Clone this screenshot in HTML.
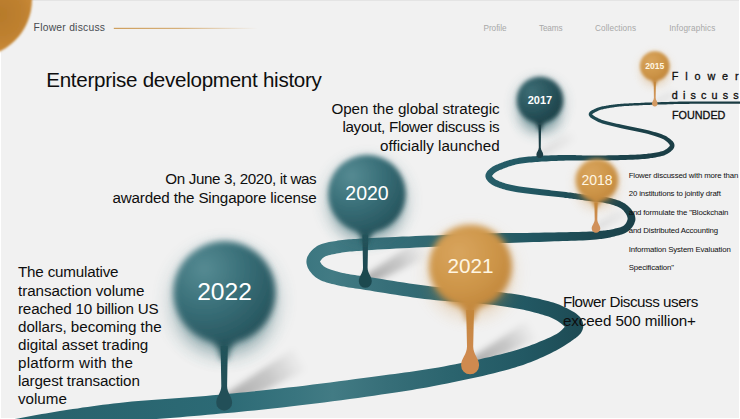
<!DOCTYPE html>
<html lang="en"><head><meta charset="utf-8"><title>Flower discuss</title>
<style>
html,body{margin:0;padding:0;background:#fff}
body{width:740px;height:419px;overflow:hidden;position:relative;font-family:"Liberation Sans", sans-serif}
#bg{position:absolute;left:1px;top:0;width:738px;height:417px;background:#f1f1f1;border-top:1px solid #e4e4e4;overflow:hidden}
#stage{position:absolute;left:0;top:0;width:740px;height:419px;overflow:hidden}
.t{position:absolute;white-space:pre;line-height:normal}
</style></head><body>
<div id="bg"></div>
<div id="stage">
<svg width="740" height="419" viewBox="0 0 740 419" style="position:absolute;left:0;top:0">
<defs><linearGradient id="rg" gradientUnits="userSpaceOnUse" x1="0" y1="0" x2="740" y2="0">
<stop offset="0" stop-color="#27606a"/><stop offset="0.30" stop-color="#2c6a75"/><stop offset="0.40" stop-color="#39757f"/><stop offset="0.45" stop-color="#427b84"/><stop offset="0.52" stop-color="#376f79"/><stop offset="0.61" stop-color="#2b646e"/><stop offset="0.71" stop-color="#225863"/><stop offset="0.79" stop-color="#1d4a53"/><stop offset="0.86" stop-color="#1b4048"/><stop offset="1" stop-color="#1a3a41"/></linearGradient>
<radialGradient id="gt" cx="0.30" cy="0.27" r="0.88"><stop offset="0" stop-color="#568b93"/><stop offset="0.45" stop-color="#396f78"/><stop offset="0.8" stop-color="#2a5a63"/><stop offset="1" stop-color="#1e4850"/></radialGradient>
<radialGradient id="gd" cx="0.32" cy="0.32" r="0.80"><stop offset="0" stop-color="#3d6d75"/><stop offset="0.5" stop-color="#2a565e"/><stop offset="1" stop-color="#193c43"/></radialGradient>
<radialGradient id="go" cx="0.36" cy="0.34" r="0.80"><stop offset="0" stop-color="#d9a55e"/><stop offset="0.55" stop-color="#cd9548"/><stop offset="1" stop-color="#be8238"/></radialGradient>
<radialGradient id="gb" gradientUnits="userSpaceOnUse" cx="0" cy="14" r="40"><stop offset="0" stop-color="#b67a2b"/><stop offset="0.6" stop-color="#bf8130"/><stop offset="1" stop-color="#cc8c3a"/></radialGradient>
<linearGradient id="hl" x1="0" x2="1"><stop offset="0" stop-color="#c07c1e"/><stop offset="0.45" stop-color="#c4842a" stop-opacity="0.85"/><stop offset="1" stop-color="#c88a32" stop-opacity="0"/></linearGradient>
<filter id="b2015" x="-30%" y="-30%" width="160%" height="160%"><feGaussianBlur stdDeviation="1.5"/></filter>
<filter id="h2015" x="-50%" y="-50%" width="200%" height="200%"><feGaussianBlur stdDeviation="4.8"/></filter>
<filter id="b2017" x="-30%" y="-30%" width="160%" height="160%"><feGaussianBlur stdDeviation="2.2"/></filter>
<filter id="h2017" x="-50%" y="-50%" width="200%" height="200%"><feGaussianBlur stdDeviation="7.0"/></filter>
<filter id="b2018" x="-30%" y="-30%" width="160%" height="160%"><feGaussianBlur stdDeviation="1.9"/></filter>
<filter id="h2018" x="-50%" y="-50%" width="200%" height="200%"><feGaussianBlur stdDeviation="6.1"/></filter>
<filter id="b2020" x="-30%" y="-30%" width="160%" height="160%"><feGaussianBlur stdDeviation="2.6"/></filter>
<filter id="h2020" x="-50%" y="-50%" width="200%" height="200%"><feGaussianBlur stdDeviation="8.3"/></filter>
<filter id="b2021" x="-30%" y="-30%" width="160%" height="160%"><feGaussianBlur stdDeviation="3.0"/></filter>
<filter id="h2021" x="-50%" y="-50%" width="200%" height="200%"><feGaussianBlur stdDeviation="9.6"/></filter>
<filter id="b2022" x="-30%" y="-30%" width="160%" height="160%"><feGaussianBlur stdDeviation="3.3"/></filter>
<filter id="h2022" x="-50%" y="-50%" width="200%" height="200%"><feGaussianBlur stdDeviation="10.6"/></filter>
<filter id="bb" x="-10%" y="-10%" width="120%" height="120%"><feGaussianBlur stdDeviation="1.1"/></filter>
<filter id="sh" x="-30%" y="-30%" width="160%" height="160%"><feGaussianBlur stdDeviation="3"/></filter>
<filter id="s1" x="-10%" y="-10%" width="120%" height="120%"><feGaussianBlur stdDeviation="0.5"/></filter>
<linearGradient id="sg2015" gradientUnits="userSpaceOnUse" x1="654.8" y1="103.6" x2="677.3" y2="90.6"><stop offset="0" stop-color="#000" stop-opacity="0.1"/><stop offset="0.55" stop-color="#000" stop-opacity="0.060"/><stop offset="1" stop-color="#000" stop-opacity="0"/></linearGradient>
<linearGradient id="sg2017" gradientUnits="userSpaceOnUse" x1="539.8" y1="154.5" x2="575.3" y2="134.1"><stop offset="0" stop-color="#000" stop-opacity="0.1"/><stop offset="0.55" stop-color="#000" stop-opacity="0.060"/><stop offset="1" stop-color="#000" stop-opacity="0"/></linearGradient>
<linearGradient id="sg2018" gradientUnits="userSpaceOnUse" x1="596.0" y1="228.4" x2="628.4" y2="209.8"><stop offset="0" stop-color="#000" stop-opacity="0.1"/><stop offset="0.55" stop-color="#000" stop-opacity="0.060"/><stop offset="1" stop-color="#000" stop-opacity="0"/></linearGradient>
<linearGradient id="sg2020" gradientUnits="userSpaceOnUse" x1="365.3" y1="281.3" x2="424.4" y2="247.4"><stop offset="0" stop-color="#000" stop-opacity="0.3"/><stop offset="0.55" stop-color="#000" stop-opacity="0.180"/><stop offset="1" stop-color="#000" stop-opacity="0"/></linearGradient>
<linearGradient id="sg2021" gradientUnits="userSpaceOnUse" x1="470.1" y1="365.3" x2="533.3" y2="329.0"><stop offset="0" stop-color="#000" stop-opacity="0.3"/><stop offset="0.55" stop-color="#000" stop-opacity="0.180"/><stop offset="1" stop-color="#000" stop-opacity="0"/></linearGradient>
<linearGradient id="sg2022" gradientUnits="userSpaceOnUse" x1="224.2" y1="402.7" x2="301.8" y2="358.1"><stop offset="0" stop-color="#000" stop-opacity="0.3"/><stop offset="0.55" stop-color="#000" stop-opacity="0.180"/><stop offset="1" stop-color="#000" stop-opacity="0"/></linearGradient>
<linearGradient id="st2015" x1="0" y1="0" x2="0" y2="1"><stop offset="0" stop-color="#c4863a"/><stop offset="0.7" stop-color="#d39a62"/><stop offset="1" stop-color="#d39a62"/></linearGradient>
<linearGradient id="st2017" x1="0" y1="0" x2="0" y2="1"><stop offset="0" stop-color="#1a3d44"/><stop offset="0.7" stop-color="#1b3d44"/><stop offset="1" stop-color="#1b3d44"/></linearGradient>
<linearGradient id="st2018" x1="0" y1="0" x2="0" y2="1"><stop offset="0" stop-color="#c4863a"/><stop offset="0.7" stop-color="#d0905a"/><stop offset="1" stop-color="#d0905a"/></linearGradient>
<linearGradient id="st2020" x1="0" y1="0" x2="0" y2="1"><stop offset="0" stop-color="#24525a"/><stop offset="0.7" stop-color="#1d4850"/><stop offset="1" stop-color="#1d4850"/></linearGradient>
<linearGradient id="st2021" x1="0" y1="0" x2="0" y2="1"><stop offset="0" stop-color="#c4863a"/><stop offset="0.7" stop-color="#cf8a50"/><stop offset="1" stop-color="#cf8a50"/></linearGradient>
<linearGradient id="st2022" x1="0" y1="0" x2="0" y2="1"><stop offset="0" stop-color="#24525a"/><stop offset="0.7" stop-color="#245058"/><stop offset="1" stop-color="#245058"/></linearGradient></defs>
<circle cx="-26" cy="-0.5" r="58" fill="url(#gb)" filter="url(#bb)"/>
<rect x="113.8" y="27.85" width="144" height="0.85" fill="url(#hl)"/>
<path d="M653.8,101.9 L675.5,87.5 L679.2,93.8 L655.8,105.3Z" fill="url(#sg2015)" filter="url(#sh)"/>
<path d="M538.3,151.9 L572.4,129.1 L578.2,139.1 L541.3,157.1Z" fill="url(#sg2017)" filter="url(#sh)"/>
<path d="M594.6,226.0 L625.8,205.2 L631.1,214.3 L597.4,230.8Z" fill="url(#sg2018)" filter="url(#sh)"/>
<path d="M362.8,276.9 L419.6,239.0 L429.2,255.7 L367.8,285.7Z" fill="url(#sg2020)" filter="url(#sh)"/>
<path d="M467.4,360.6 L528.2,320.1 L538.4,337.9 L472.8,370.0Z" fill="url(#sg2021)" filter="url(#sh)"/>
<path d="M220.9,396.9 L295.5,347.1 L308.1,369.0 L227.5,408.5Z" fill="url(#sg2022)" filter="url(#sh)"/>
<path d="M748.0,101.4 L747.3,101.4 L745.3,101.4 L742.2,101.4 L738.3,101.4 L733.7,101.4 L728.6,101.4 L723.3,101.4 L717.9,101.4 L712.7,101.4 L707.8,101.4 L703.5,101.4 L700.0,101.5 L698.1,101.5 L696.4,101.5 L694.7,101.5 L693.1,101.5 L691.6,101.5 L690.1,101.5 L688.7,101.5 L687.2,101.5 L685.7,101.5 L684.2,101.6 L682.6,101.6 L681.0,101.6 L678.9,101.6 L676.9,101.7 L674.7,101.7 L672.5,101.8 L670.3,101.8 L668.1,101.9 L665.9,102.0 L663.6,102.0 L661.4,102.1 L659.2,102.2 L657.1,102.2 L655.0,102.3 L653.0,102.4 L651.1,102.4 L649.2,102.5 L647.3,102.6 L645.4,102.6 L643.5,102.7 L641.6,102.8 L639.8,102.9 L638.0,102.9 L636.3,103.0 L634.6,103.1 L632.9,103.2 L631.7,103.2 L630.6,103.3 L629.4,103.3 L628.3,103.4 L627.2,103.4 L626.2,103.5 L625.1,103.5 L624.1,103.6 L623.0,103.7 L622.0,103.7 L620.9,103.8 L619.9,103.9 L618.8,104.0 L617.8,104.1 L616.8,104.2 L615.8,104.3 L614.7,104.4 L613.7,104.5 L612.7,104.7 L611.7,104.8 L610.7,105.0 L609.7,105.1 L608.7,105.3 L607.8,105.4 L606.9,105.6 L606.0,105.7 L605.1,105.9 L604.3,106.0 L603.4,106.2 L602.5,106.3 L601.6,106.5 L600.8,106.7 L599.9,107.0 L599.1,107.2 L598.2,107.5 L597.4,107.8 L596.7,108.1 L595.8,108.5 L595.0,108.8 L594.1,109.2 L593.2,109.7 L592.4,110.1 L591.5,110.6 L590.8,111.1 L590.1,111.6 L589.5,112.3 L589.0,113.1 L588.7,114.1 L588.8,115.2 L589.3,116.0 L589.8,116.8 L590.4,117.4 L591.2,118.0 L591.9,118.5 L592.8,119.1 L593.7,119.6 L594.6,120.1 L595.5,120.6 L596.4,121.0 L597.3,121.5 L598.8,122.2 L600.4,122.8 L602.1,123.4 L604.0,124.0 L605.9,124.5 L607.9,125.0 L609.9,125.6 L611.9,126.1 L614.0,126.5 L616.1,127.0 L618.1,127.5 L620.1,128.0 L622.4,128.5 L624.7,129.1 L627.1,129.6 L629.6,130.1 L632.0,130.5 L634.5,131.0 L636.9,131.5 L639.4,132.0 L641.7,132.5 L644.0,133.0 L646.1,133.5 L648.2,134.1 L649.8,134.6 L651.5,135.0 L653.1,135.5 L654.7,135.9 L656.2,136.4 L657.7,136.9 L659.1,137.4 L660.5,137.9 L661.7,138.4 L662.9,139.0 L663.9,139.5 L664.9,140.2 L665.6,140.7 L666.2,141.2 L666.9,141.7 L667.5,142.3 L668.1,142.9 L668.6,143.4 L669.1,143.9 L669.4,144.4 L669.7,144.9 L669.8,145.2 L669.9,145.4 L669.9,145.5 L669.8,145.5 L669.8,145.7 L669.6,146.0 L669.3,146.4 L669.0,146.8 L668.5,147.3 L668.0,147.8 L667.5,148.2 L666.8,148.7 L666.2,149.2 L665.5,149.6 L664.9,150.0 L664.0,150.5 L662.9,150.9 L661.8,151.3 L660.5,151.6 L659.2,151.9 L657.8,152.2 L656.3,152.5 L654.8,152.7 L653.2,153.0 L651.6,153.2 L650.0,153.4 L648.4,153.6 L646.3,153.9 L644.2,154.1 L642.0,154.3 L639.8,154.4 L637.5,154.6 L635.1,154.7 L632.7,154.8 L630.3,154.8 L627.9,154.9 L625.4,155.0 L622.9,155.0 L620.4,155.1 L617.6,155.2 L614.7,155.2 L611.6,155.3 L608.5,155.3 L605.4,155.4 L602.3,155.4 L599.2,155.4 L596.2,155.4 L593.3,155.4 L590.5,155.4 L587.8,155.4 L585.4,155.4 L583.9,155.4 L582.6,155.4 L581.3,155.3 L580.0,155.3 L578.8,155.2 L577.7,155.2 L576.5,155.2 L575.3,155.1 L574.1,155.1 L572.8,155.1 L571.4,155.1 L570.0,155.1 L567.9,155.1 L565.7,155.1 L563.4,155.1 L561.0,155.1 L558.6,155.1 L556.1,155.2 L553.6,155.3 L551.1,155.3 L548.6,155.4 L546.1,155.5 L543.7,155.6 L541.4,155.8 L539.3,155.9 L537.2,156.0 L535.1,156.2 L533.0,156.3 L530.9,156.5 L528.9,156.6 L526.8,156.8 L524.8,157.0 L522.8,157.3 L520.9,157.5 L519.0,157.8 L517.1,158.2 L515.7,158.4 L514.4,158.7 L513.1,159.0 L511.8,159.4 L510.5,159.7 L509.3,160.0 L508.1,160.4 L506.9,160.8 L505.7,161.2 L504.5,161.6 L503.4,162.0 L502.3,162.4 L501.3,162.8 L500.3,163.2 L499.3,163.5 L498.3,163.9 L497.3,164.4 L496.2,164.8 L495.2,165.3 L494.3,165.7 L493.3,166.3 L492.4,166.8 L491.5,167.4 L490.7,168.0 L490.1,168.5 L489.6,169.0 L489.0,169.5 L488.5,170.0 L487.9,170.5 L487.4,171.1 L486.9,171.8 L486.5,172.5 L486.1,173.2 L485.7,174.0 L485.5,175.0 L485.4,176.0 L485.5,177.1 L485.8,178.0 L486.1,178.8 L486.5,179.5 L487.0,180.2 L487.5,180.8 L488.0,181.4 L488.5,181.9 L489.1,182.5 L489.6,182.9 L490.2,183.4 L490.8,183.8 L491.6,184.4 L492.5,185.0 L493.4,185.5 L494.4,186.0 L495.3,186.4 L496.4,186.8 L497.4,187.2 L498.4,187.6 L499.4,188.0 L500.4,188.3 L501.4,188.6 L502.4,189.0 L503.6,189.3 L504.8,189.6 L505.9,189.9 L507.1,190.2 L508.3,190.5 L509.5,190.8 L510.7,191.0 L512.0,191.2 L513.2,191.5 L514.5,191.7 L515.8,191.9 L517.2,192.2 L519.0,192.5 L520.9,192.7 L522.8,193.0 L524.7,193.3 L526.7,193.5 L528.8,193.8 L530.8,194.0 L532.9,194.2 L535.0,194.5 L537.1,194.7 L539.2,194.9 L541.2,195.2 L543.6,195.4 L545.9,195.7 L548.4,196.0 L550.9,196.3 L553.4,196.5 L555.9,196.8 L558.3,197.1 L560.7,197.3 L563.1,197.6 L565.4,197.9 L567.6,198.1 L569.6,198.4 L571.1,198.6 L572.4,198.7 L573.7,198.9 L574.9,199.1 L576.2,199.2 L577.3,199.4 L578.5,199.6 L579.7,199.7 L581.0,199.9 L582.2,200.1 L583.6,200.3 L585.0,200.5 L587.0,200.7 L589.1,201.0 L591.3,201.2 L593.6,201.5 L595.9,201.7 L598.3,202.0 L600.6,202.3 L602.8,202.6 L605.0,203.0 L607.0,203.4 L608.9,203.8 L610.7,204.3 L612.0,204.7 L613.2,205.1 L614.4,205.5 L615.6,205.9 L616.7,206.3 L617.8,206.8 L618.8,207.2 L619.7,207.7 L620.6,208.2 L621.4,208.8 L622.2,209.4 L622.9,210.0 L623.5,210.6 L624.1,211.4 L624.8,212.2 L625.3,213.0 L625.9,213.8 L626.4,214.7 L626.8,215.5 L627.1,216.3 L627.3,217.0 L627.5,217.7 L627.6,218.2 L627.6,218.6 L627.6,219.0 L627.5,219.4 L627.4,219.9 L627.2,220.5 L627.0,221.1 L626.7,221.8 L626.4,222.4 L626.0,223.1 L625.6,223.7 L625.1,224.3 L624.6,224.8 L624.2,225.3 L623.6,225.7 L623.0,226.1 L622.3,226.5 L621.5,226.8 L620.5,227.2 L619.5,227.5 L618.5,227.8 L617.4,228.1 L616.2,228.3 L615.0,228.6 L613.8,228.9 L612.6,229.2 L611.3,229.4 L610.1,229.7 L608.8,229.9 L607.6,230.1 L606.3,230.3 L604.9,230.4 L603.6,230.5 L602.1,230.7 L600.6,230.8 L599.0,230.9 L597.4,231.0 L595.7,231.2 L592.7,231.4 L589.5,231.5 L586.1,231.7 L582.5,231.8 L578.7,231.9 L574.8,232.0 L570.8,232.1 L566.8,232.2 L562.6,232.3 L558.4,232.3 L554.1,232.4 L549.9,232.5 L544.5,232.6 L538.8,232.7 L533.0,232.8 L526.9,232.9 L520.8,232.9 L514.6,233.0 L508.4,233.1 L502.3,233.1 L496.3,233.2 L490.6,233.3 L485.0,233.4 L479.8,233.6 L476.1,233.7 L472.6,233.8 L469.2,233.9 L466.0,234.0 L462.9,234.1 L459.8,234.3 L456.7,234.4 L453.5,234.6 L450.3,234.7 L446.9,234.8 L443.4,235.0 L439.7,235.2 L434.3,235.4 L428.4,235.6 L422.1,235.8 L415.6,236.1 L408.9,236.4 L402.2,236.6 L395.5,236.9 L388.9,237.2 L382.6,237.4 L376.6,237.7 L371.1,238.0 L366.1,238.3 L363.3,238.5 L360.7,238.6 L358.2,238.8 L355.8,238.9 L353.4,239.0 L351.1,239.2 L348.9,239.3 L346.7,239.5 L344.5,239.7 L342.3,240.0 L340.1,240.3 L337.9,240.6 L336.2,240.9 L334.4,241.2 L332.6,241.5 L330.8,241.8 L329.0,242.1 L327.1,242.5 L325.3,242.9 L323.4,243.4 L321.6,244.0 L319.8,244.8 L318.0,245.6 L316.4,246.6 L315.2,247.5 L314.1,248.3 L313.0,249.2 L312.0,250.2 L311.0,251.3 L310.0,252.4 L309.2,253.6 L308.4,254.9 L307.6,256.3 L307.0,257.8 L306.6,259.5 L306.4,261.4 L306.5,263.3 L306.9,265.0 L307.4,266.7 L308.0,268.2 L308.8,269.5 L309.6,270.9 L310.5,272.1 L311.5,273.3 L312.5,274.4 L313.6,275.4 L314.7,276.4 L315.9,277.4 L317.5,278.5 L319.2,279.6 L321.0,280.4 L322.8,281.2 L324.7,281.8 L326.5,282.4 L328.4,282.9 L330.2,283.4 L332.0,283.9 L333.8,284.3 L335.6,284.8 L337.4,285.2 L339.6,285.7 L341.8,286.2 L344.0,286.6 L346.2,287.0 L348.4,287.4 L350.7,287.8 L353.0,288.1 L355.3,288.4 L357.8,288.8 L360.2,289.1 L362.8,289.5 L365.5,289.9 L369.9,290.6 L374.6,291.4 L379.6,292.2 L384.9,293.0 L390.3,293.9 L395.9,294.8 L401.6,295.7 L407.4,296.5 L413.1,297.4 L418.9,298.2 L424.6,298.9 L430.2,299.6 L436.1,300.3 L442.0,300.8 L448.1,301.3 L454.1,301.8 L460.2,302.3 L466.3,302.7 L472.2,303.2 L478.1,303.6 L483.7,304.1 L489.1,304.6 L494.3,305.1 L499.1,305.7 L502.5,306.2 L505.8,306.7 L509.0,307.2 L512.1,307.7 L515.1,308.2 L518.0,308.7 L520.9,309.3 L523.7,309.8 L526.4,310.4 L529.0,311.0 L531.7,311.7 L534.3,312.4 L536.5,313.0 L538.6,313.6 L540.7,314.2 L542.8,314.8 L544.8,315.4 L546.7,316.0 L548.5,316.6 L550.2,317.3 L551.9,318.0 L553.4,318.7 L554.9,319.5 L556.3,320.3 L557.6,321.1 L559.0,322.1 L560.4,323.1 L561.7,324.1 L562.9,325.1 L564.0,326.0 L564.9,326.9 L565.6,327.6 L565.9,328.1 L565.9,328.2 L565.6,327.7 L565.4,326.7 L565.4,325.3 L565.7,324.5 L565.9,324.2 L566.1,324.3 L566.0,324.7 L565.7,325.3 L565.3,326.0 L564.7,326.8 L564.0,327.7 L563.2,328.6 L562.3,329.5 L561.5,330.3 L560.1,331.5 L558.5,332.7 L556.6,333.9 L554.5,335.1 L552.2,336.2 L549.7,337.4 L547.2,338.5 L544.6,339.7 L542.0,340.8 L539.3,341.8 L536.8,342.9 L534.3,343.9 L531.9,344.8 L529.6,345.7 L527.4,346.5 L525.1,347.3 L522.8,348.1 L520.5,348.8 L518.2,349.5 L515.7,350.2 L513.2,351.0 L510.5,351.7 L507.7,352.5 L504.8,353.2 L500.2,354.4 L495.3,355.6 L490.1,356.9 L484.6,358.1 L479.0,359.4 L473.2,360.6 L467.3,361.8 L461.3,363.0 L455.4,364.2 L449.6,365.3 L443.9,366.4 L438.4,367.4 L433.4,368.3 L428.5,369.1 L423.7,369.8 L418.9,370.6 L414.2,371.2 L409.4,371.9 L404.6,372.6 L399.7,373.2 L394.7,373.9 L389.5,374.5 L384.2,375.2 L378.7,376.0 L371.3,377.0 L363.5,378.0 L355.5,379.1 L347.2,380.2 L338.8,381.3 L330.2,382.4 L321.6,383.5 L313.0,384.6 L304.5,385.7 L296.1,386.7 L287.9,387.6 L279.9,388.6 L272.9,389.3 L266.0,390.1 L259.2,390.8 L252.4,391.5 L245.7,392.2 L239.1,392.8 L232.4,393.5 L225.8,394.1 L219.2,394.7 L212.5,395.3 L205.8,395.9 L199.2,396.5 L192.5,397.1 L185.8,397.6 L179.0,398.1 L172.2,398.6 L165.3,399.1 L158.5,399.6 L151.7,400.1 L145.0,400.6 L138.3,401.1 L131.8,401.6 L125.3,402.3 L118.9,402.9 L113.5,403.5 L108.2,404.2 L102.9,404.8 L97.7,405.5 L92.6,406.2 L87.6,406.9 L82.6,407.6 L77.7,408.4 L72.8,409.1 L67.9,409.8 L63.2,410.6 L58.4,411.3 L54.2,412.0 L50.0,412.7 L45.8,413.4 L41.8,414.1 L37.7,414.8 L33.7,415.5 L29.7,416.3 L25.8,417.0 L21.9,417.7 L18.0,418.4 L14.1,419.1 L10.3,419.8 L6.4,420.4 L2.1,421.2 L-2.4,422.0 L-7.1,422.8 L-11.7,423.6 L-16.2,424.4 L-20.3,425.1 L-24.1,425.8 L-27.2,426.4 L-29.6,426.8 L-31.2,427.1 L-31.7,427.2 L-28.3,446.8 L-27.7,446.8 L-26.2,446.5 L-23.7,446.0 L-20.6,445.5 L-16.9,444.8 L-12.7,444.1 L-8.2,443.3 L-3.6,442.5 L1.1,441.7 L5.6,440.9 L9.9,440.1 L13.7,439.4 L17.6,438.8 L21.5,438.1 L25.4,437.4 L29.3,436.7 L33.3,436.0 L37.2,435.2 L41.2,434.5 L45.2,433.8 L49.2,433.1 L53.3,432.4 L57.4,431.8 L61.6,431.1 L66.3,430.3 L71.1,429.5 L75.9,428.8 L80.7,428.0 L85.6,427.2 L90.5,426.5 L95.4,425.7 L100.4,425.0 L105.5,424.3 L110.6,423.6 L115.8,422.9 L121.1,422.3 L127.2,421.6 L133.5,421.0 L140.0,420.4 L146.6,419.8 L153.2,419.3 L159.9,418.7 L166.7,418.2 L173.6,417.7 L180.4,417.2 L187.3,416.6 L194.1,416.1 L200.8,415.5 L207.6,414.8 L214.2,414.2 L220.9,413.6 L227.6,413.0 L234.2,412.4 L240.9,411.7 L247.6,411.1 L254.4,410.4 L261.2,409.7 L268.0,409.0 L275.0,408.2 L282.1,407.4 L290.1,406.5 L298.3,405.5 L306.8,404.5 L315.4,403.5 L324.0,402.4 L332.7,401.3 L341.2,400.2 L349.7,399.0 L358.0,397.9 L366.1,396.8 L373.9,395.7 L381.3,394.6 L386.8,393.8 L392.1,393.0 L397.3,392.2 L402.3,391.4 L407.2,390.7 L412.1,389.9 L416.9,389.1 L421.8,388.3 L426.6,387.4 L431.5,386.5 L436.5,385.6 L441.6,384.6 L447.2,383.5 L453.0,382.3 L458.9,381.1 L464.8,379.8 L470.8,378.6 L476.8,377.2 L482.7,375.9 L488.4,374.5 L494.0,373.2 L499.4,371.8 L504.5,370.5 L509.2,369.2 L512.2,368.3 L515.1,367.4 L517.8,366.6 L520.5,365.7 L523.1,364.9 L525.6,364.0 L528.0,363.1 L530.5,362.2 L532.9,361.3 L535.4,360.3 L537.8,359.2 L540.3,358.1 L542.9,357.0 L545.5,355.8 L548.1,354.5 L550.8,353.2 L553.5,351.8 L556.2,350.4 L558.8,349.0 L561.4,347.5 L563.9,346.1 L566.2,344.6 L568.5,343.1 L570.5,341.7 L571.7,340.8 L572.9,340.0 L574.1,339.1 L575.4,338.3 L576.6,337.3 L577.9,336.3 L579.1,335.1 L580.4,333.7 L581.5,332.0 L582.5,329.9 L583.2,327.4 L583.2,324.3 L582.5,321.2 L581.1,318.6 L579.5,316.6 L577.8,314.9 L576.1,313.5 L574.3,312.3 L572.4,311.2 L570.6,310.2 L568.8,309.2 L567.0,308.3 L565.4,307.5 L563.7,306.7 L561.7,305.7 L559.6,304.8 L557.5,304.0 L555.3,303.3 L553.2,302.6 L551.0,301.9 L548.8,301.3 L546.6,300.8 L544.4,300.2 L542.2,299.7 L540.0,299.1 L537.7,298.6 L535.0,298.0 L532.1,297.4 L529.3,296.8 L526.4,296.2 L523.4,295.6 L520.4,295.1 L517.4,294.6 L514.3,294.1 L511.0,293.6 L507.8,293.2 L504.4,292.7 L500.9,292.3 L495.8,291.7 L490.4,291.1 L484.8,290.6 L479.1,290.2 L473.2,289.8 L467.2,289.4 L461.2,288.9 L455.1,288.5 L449.1,288.0 L443.2,287.6 L437.4,287.0 L431.8,286.4 L426.3,285.7 L420.7,285.0 L415.0,284.2 L409.3,283.4 L403.6,282.6 L397.9,281.7 L392.4,280.8 L386.9,280.0 L381.7,279.1 L376.7,278.3 L372.0,277.6 L367.5,276.9 L364.8,276.5 L362.1,276.1 L359.6,275.7 L357.2,275.4 L354.9,275.1 L352.6,274.7 L350.5,274.4 L348.4,274.1 L346.4,273.7 L344.5,273.3 L342.6,272.9 L340.6,272.4 L338.9,271.9 L337.1,271.5 L335.3,271.0 L333.7,270.6 L332.0,270.1 L330.5,269.6 L329.1,269.1 L327.8,268.6 L326.7,268.1 L325.7,267.6 L324.9,267.1 L324.1,266.6 L323.6,266.2 L323.0,265.6 L322.4,265.0 L321.8,264.4 L321.3,263.7 L320.9,263.1 L320.5,262.6 L320.3,262.1 L320.1,261.7 L320.0,261.5 L320.0,261.5 L320.0,261.6 L320.0,261.8 L320.0,261.8 L320.0,261.7 L320.1,261.3 L320.4,260.9 L320.7,260.4 L321.1,259.9 L321.5,259.4 L322.0,258.8 L322.6,258.3 L323.1,257.8 L323.6,257.4 L324.3,256.9 L325.1,256.5 L326.1,256.1 L327.2,255.7 L328.5,255.3 L330.0,254.9 L331.5,254.6 L333.1,254.2 L334.8,253.9 L336.5,253.6 L338.3,253.3 L340.1,253.0 L342.0,252.6 L344.0,252.3 L345.9,252.0 L347.9,251.8 L349.9,251.6 L352.1,251.4 L354.2,251.2 L356.5,251.0 L358.9,250.9 L361.5,250.7 L364.1,250.5 L366.9,250.3 L371.8,249.9 L377.3,249.6 L383.2,249.3 L389.5,248.9 L396.0,248.6 L402.7,248.3 L409.4,248.0 L416.1,247.6 L422.6,247.3 L428.9,247.0 L434.8,246.7 L440.3,246.4 L444.0,246.2 L447.5,246.0 L450.9,245.8 L454.1,245.6 L457.3,245.4 L460.4,245.2 L463.4,245.0 L466.6,244.8 L469.8,244.6 L473.1,244.4 L476.5,244.2 L480.2,244.0 L485.4,243.8 L490.9,243.6 L496.6,243.4 L502.6,243.1 L508.6,242.9 L514.8,242.7 L521.0,242.5 L527.1,242.3 L533.2,242.1 L539.1,241.9 L544.7,241.7 L550.1,241.5 L554.4,241.3 L558.6,241.2 L562.8,241.1 L567.0,240.9 L571.1,240.8 L575.1,240.7 L579.0,240.5 L582.8,240.4 L586.5,240.2 L590.0,240.0 L593.3,239.7 L596.3,239.4 L598.1,239.2 L599.8,239.1 L601.4,238.9 L603.0,238.7 L604.5,238.4 L606.0,238.2 L607.4,238.0 L608.8,237.7 L610.2,237.4 L611.6,237.1 L613.0,236.8 L614.4,236.4 L615.6,236.1 L616.8,235.8 L618.0,235.5 L619.2,235.2 L620.5,234.8 L621.7,234.4 L623.0,234.0 L624.2,233.5 L625.4,232.9 L626.6,232.3 L627.8,231.6 L628.8,230.7 L629.7,230.0 L630.5,229.1 L631.3,228.3 L632.0,227.4 L632.7,226.4 L633.3,225.4 L633.9,224.4 L634.4,223.3 L634.8,222.1 L635.2,220.9 L635.4,219.7 L635.4,218.4 L635.2,217.0 L634.9,215.6 L634.4,214.4 L633.8,213.1 L633.2,212.0 L632.4,210.9 L631.6,209.8 L630.8,208.8 L629.9,207.8 L629.0,206.9 L628.1,206.0 L627.1,205.2 L626.1,204.4 L625.0,203.6 L623.8,202.9 L622.6,202.3 L621.4,201.7 L620.2,201.1 L618.9,200.6 L617.7,200.2 L616.4,199.7 L615.0,199.3 L613.7,198.9 L612.3,198.5 L610.3,198.0 L608.2,197.5 L606.0,197.1 L603.7,196.8 L601.3,196.5 L598.9,196.2 L596.6,195.9 L594.2,195.7 L592.0,195.5 L589.8,195.2 L587.7,195.0 L585.8,194.7 L584.4,194.5 L583.1,194.3 L581.8,194.2 L580.5,194.0 L579.3,193.8 L578.1,193.7 L576.9,193.5 L575.7,193.3 L574.5,193.2 L573.2,193.0 L571.8,192.8 L570.4,192.6 L568.3,192.4 L566.1,192.1 L563.8,191.8 L561.4,191.5 L559.0,191.2 L556.5,190.9 L554.0,190.7 L551.5,190.4 L549.1,190.1 L546.6,189.8 L544.3,189.5 L542.0,189.2 L539.9,189.0 L537.8,188.7 L535.7,188.5 L533.6,188.3 L531.5,188.0 L529.5,187.8 L527.5,187.6 L525.5,187.3 L523.6,187.1 L521.7,186.8 L519.9,186.5 L518.2,186.2 L516.9,186.0 L515.6,185.8 L514.4,185.5 L513.1,185.3 L512.0,185.1 L510.8,184.8 L509.7,184.5 L508.6,184.3 L507.5,184.0 L506.4,183.7 L505.4,183.4 L504.4,183.0 L503.4,182.7 L502.4,182.4 L501.5,182.1 L500.5,181.7 L499.6,181.4 L498.7,181.0 L497.9,180.6 L497.1,180.3 L496.4,179.9 L495.7,179.5 L495.2,179.2 L494.6,178.8 L494.3,178.4 L493.9,178.1 L493.5,177.7 L493.1,177.4 L492.8,177.0 L492.5,176.7 L492.3,176.4 L492.1,176.1 L492.0,175.9 L492.0,175.8 L492.0,175.8 L492.0,176.0 L492.0,176.1 L492.0,176.1 L492.0,176.0 L492.1,175.8 L492.3,175.5 L492.5,175.2 L492.8,174.9 L493.1,174.5 L493.5,174.1 L493.9,173.7 L494.3,173.3 L494.7,173.0 L495.2,172.6 L495.8,172.2 L496.5,171.8 L497.2,171.3 L498.0,170.9 L498.8,170.5 L499.7,170.1 L500.6,169.7 L501.6,169.4 L502.6,169.0 L503.5,168.6 L504.5,168.2 L505.6,167.8 L506.6,167.4 L507.7,167.0 L508.8,166.6 L509.9,166.2 L511.0,165.9 L512.2,165.5 L513.3,165.2 L514.5,164.9 L515.7,164.6 L517.0,164.3 L518.3,164.0 L520.0,163.7 L521.7,163.4 L523.6,163.2 L525.4,163.0 L527.4,162.8 L529.4,162.6 L531.4,162.4 L533.5,162.2 L535.5,162.1 L537.6,161.9 L539.7,161.8 L541.8,161.6 L544.1,161.5 L546.4,161.4 L548.9,161.2 L551.3,161.1 L553.8,161.0 L556.3,160.9 L558.7,160.8 L561.1,160.8 L563.5,160.7 L565.8,160.6 L568.0,160.6 L570.0,160.5 L571.4,160.5 L572.7,160.5 L574.0,160.5 L575.2,160.5 L576.4,160.5 L577.5,160.5 L578.7,160.6 L579.9,160.6 L581.2,160.6 L582.5,160.6 L583.9,160.6 L585.4,160.6 L587.8,160.6 L590.5,160.6 L593.3,160.6 L596.2,160.5 L599.2,160.5 L602.3,160.5 L605.5,160.4 L608.6,160.4 L611.7,160.3 L614.8,160.3 L617.7,160.2 L620.6,160.1 L623.1,160.0 L625.5,159.9 L628.0,159.8 L630.5,159.8 L632.9,159.7 L635.3,159.6 L637.7,159.4 L640.1,159.3 L642.4,159.1 L644.7,158.9 L646.9,158.7 L649.0,158.4 L650.7,158.1 L652.3,157.9 L653.9,157.7 L655.5,157.4 L657.1,157.1 L658.7,156.8 L660.2,156.5 L661.7,156.1 L663.2,155.7 L664.6,155.2 L665.9,154.6 L667.1,154.0 L667.9,153.5 L668.7,153.0 L669.5,152.5 L670.3,151.9 L671.1,151.3 L671.8,150.6 L672.5,150.0 L673.1,149.2 L673.6,148.4 L674.1,147.6 L674.4,146.6 L674.5,145.5 L674.4,144.5 L674.1,143.5 L673.6,142.6 L673.1,141.8 L672.5,141.1 L671.8,140.4 L671.0,139.7 L670.3,139.1 L669.5,138.5 L668.7,137.9 L667.9,137.4 L667.1,136.8 L665.9,136.1 L664.6,135.5 L663.3,134.9 L661.8,134.3 L660.4,133.8 L658.9,133.3 L657.3,132.8 L655.7,132.3 L654.1,131.9 L652.5,131.4 L650.8,131.0 L649.2,130.5 L647.0,130.0 L644.8,129.4 L642.5,128.9 L640.1,128.4 L637.6,127.9 L635.2,127.5 L632.7,127.0 L630.3,126.6 L627.8,126.1 L625.5,125.6 L623.1,125.1 L620.9,124.6 L618.9,124.1 L616.8,123.7 L614.8,123.2 L612.7,122.7 L610.7,122.3 L608.7,121.8 L606.8,121.3 L604.9,120.8 L603.2,120.3 L601.5,119.7 L600.1,119.1 L598.7,118.5 L597.9,118.1 L597.0,117.6 L596.2,117.2 L595.3,116.7 L594.6,116.2 L593.8,115.8 L593.2,115.3 L592.7,114.9 L592.4,114.5 L592.1,114.2 L592.1,114.1 L592.1,114.3 L592.1,114.4 L592.1,114.3 L592.3,114.1 L592.8,113.7 L593.3,113.3 L594.0,112.9 L594.7,112.5 L595.5,112.1 L596.3,111.7 L597.1,111.3 L597.9,110.9 L598.6,110.6 L599.3,110.3 L600.0,110.0 L600.7,109.8 L601.5,109.6 L602.3,109.4 L603.1,109.2 L603.9,109.0 L604.8,108.8 L605.6,108.7 L606.5,108.5 L607.4,108.3 L608.2,108.2 L609.2,108.0 L610.1,107.8 L611.1,107.7 L612.1,107.5 L613.1,107.4 L614.1,107.2 L615.1,107.1 L616.1,107.0 L617.1,106.8 L618.1,106.7 L619.1,106.6 L620.1,106.5 L621.2,106.4 L622.2,106.3 L623.2,106.2 L624.2,106.1 L625.3,106.1 L626.3,106.0 L627.4,105.9 L628.5,105.9 L629.6,105.8 L630.7,105.8 L631.9,105.7 L633.1,105.6 L634.7,105.6 L636.4,105.5 L638.1,105.4 L639.9,105.3 L641.7,105.2 L643.6,105.1 L645.5,105.1 L647.4,105.0 L649.3,104.9 L651.2,104.8 L653.1,104.8 L655.0,104.7 L657.1,104.6 L659.3,104.6 L661.5,104.5 L663.7,104.4 L665.9,104.4 L668.2,104.3 L670.4,104.2 L672.6,104.2 L674.8,104.1 L676.9,104.1 L679.0,104.0 L681.0,104.0 L682.7,104.0 L684.3,103.9 L685.8,103.9 L687.2,103.9 L688.7,103.9 L690.2,103.8 L691.6,103.8 L693.1,103.8 L694.7,103.8 L696.4,103.8 L698.1,103.8 L700.0,103.7 L703.5,103.7 L707.9,103.7 L712.7,103.7 L717.9,103.7 L723.3,103.7 L728.6,103.7 L733.7,103.7 L738.3,103.7 L742.2,103.7 L745.3,103.7 L747.3,103.7 L748.0,103.6Z" fill="url(#rg)"/>
<ellipse cx="654.8" cy="77.8" rx="11.8" ry="9.2" fill="#cf9040" opacity="0.16" filter="url(#h2015)"/>
<circle cx="654.8" cy="68.4" r="14.8" fill="#cf9040" opacity="0.26" filter="url(#h2015)"/>
<path d="M653.7,81.5 L653.9,97.7 C653.9,100.2 652.0,101.4 652.0,103.6 A2.8,2.8 0 1 0 657.6,103.6 C657.6,101.4 655.7,100.2 655.7,97.7 L655.9,81.5 Z" fill="url(#st2015)" filter="url(#s1)"/>
<g filter="url(#b2015)"><path d="M648.3,79.0 Q653.7,80.7 653.7,85.5 L655.9,85.5 Q655.9,80.7 661.3,79.0 Z" fill="#c4863a"/><circle cx="654.8" cy="66" r="14.8" fill="url(#go)"/></g>
<text x="654.8" y="68.8" font-size="8.5" text-anchor="middle" fill="#fff6e2" font-family='"Liberation Sans", sans-serif' font-weight="bold">2015</text>
<ellipse cx="540" cy="118.6" rx="18.6" ry="14.4" fill="#2f636c" opacity="0.45" filter="url(#h2017)"/>
<circle cx="540" cy="103.7" r="23.3" fill="#2f636c" opacity="0.42" filter="url(#h2017)"/>
<path d="M538.5,124.5 L538.8,147.4 C538.8,150.4 536.4,151.8 536.4,154.5 A3.4,3.4 0 1 0 543.2,154.5 C543.2,151.8 540.8,150.4 540.8,147.4 L541.1,124.5 Z" fill="url(#st2017)" filter="url(#s1)"/>
<g filter="url(#b2017)"><path d="M529.7,120.5 Q538.5,123.1 538.5,130.8 L541.1,130.8 Q541.1,123.1 550.3,120.5 Z" fill="#1a3d44"/><circle cx="540" cy="100" r="23.3" fill="url(#gd)"/></g>
<text x="540" y="103.6" font-size="11" text-anchor="middle" fill="#fff" font-family='"Liberation Sans", sans-serif' font-weight="bold">2017</text>
<ellipse cx="597" cy="197.0" rx="17.0" ry="13.2" fill="#cf9040" opacity="0.16" filter="url(#h2018)"/>
<circle cx="597" cy="183.4" r="21.3" fill="#cf9040" opacity="0.26" filter="url(#h2018)"/>
<path d="M594.4,202.4 L594.7,219.4 C594.7,223.2 591.7,225.0 591.7,228.4 A4.3,4.3 0 1 0 600.3,228.4 C600.3,225.0 597.3,223.2 597.3,219.4 L597.6,202.4 Z" fill="url(#st2018)" filter="url(#s1)"/>
<g filter="url(#b2018)"><path d="M587.6,198.7 Q594.4,201.1 594.4,208.1 L597.6,208.1 Q597.6,201.1 606.4,198.7 Z" fill="#c4863a"/><circle cx="597" cy="180" r="21.3" fill="url(#go)"/></g>
<text x="597" y="184.6" font-size="14" text-anchor="middle" fill="#fff6e2" font-family='"Liberation Sans", sans-serif' >2018</text>
<ellipse cx="367" cy="215.1" rx="31.0" ry="24.1" fill="#2f636c" opacity="0.3" filter="url(#h2020)"/>
<circle cx="367" cy="200.0" r="38.8" fill="#2f636c" opacity="0.42" filter="url(#h2020)"/>
<path d="M362.4,234.5 L363.0,267.7 C363.0,273.5 358.8,276.1 358.8,281.3 A6.5,6.5 0 1 0 371.8,281.3 C371.8,276.1 367.6,273.5 367.6,267.7 L368.2,234.5 Z" fill="url(#st2020)" filter="url(#s1)"/>
<g filter="url(#b2020)"><path d="M349.9,227.9 Q362.4,232.2 362.4,245.0 L368.2,245.0 Q368.2,232.2 384.1,227.9 Z" fill="#24525a"/><circle cx="367" cy="193.8" r="38.8" fill="url(#gt)"/></g>
<text x="367" y="200.2" font-size="19.5" text-anchor="middle" fill="#fff" font-family='"Liberation Sans", sans-serif' >2020</text>
<ellipse cx="470.5" cy="289.0" rx="33.2" ry="25.7" fill="#cf9040" opacity="0.16" filter="url(#h2021)"/>
<circle cx="470.5" cy="272.8" r="41.5" fill="#cf9040" opacity="0.26" filter="url(#h2021)"/>
<path d="M466.2,309.8 L467.0,346.4 C467.0,354.5 461.1,358.1 461.1,365.3 A9.0,9.0 0 1 0 479.1,365.3 C479.1,358.1 473.2,354.5 473.2,346.4 L474.0,309.8 Z" fill="url(#st2021)" filter="url(#s1)"/>
<g filter="url(#b2021)"><path d="M452.2,302.7 Q466.2,307.3 466.2,321.0 L474.0,321.0 Q474.0,307.3 488.8,302.7 Z" fill="#c4863a"/><circle cx="470.5" cy="266.2" r="41.5" fill="url(#go)"/></g>
<text x="470.5" y="273.0" font-size="20.7" text-anchor="middle" fill="#fff6e2" font-family='"Liberation Sans", sans-serif' >2021</text>
<ellipse cx="224.5" cy="320.4" rx="40.8" ry="31.6" fill="#2f636c" opacity="0.3" filter="url(#h2022)"/>
<circle cx="224.5" cy="300.5" r="51.0" fill="#2f636c" opacity="0.42" filter="url(#h2022)"/>
<path d="M220.6,345.9 L221.3,385.9 C221.3,393.1 216.2,396.3 216.2,402.7 A8.0,8.0 0 1 0 232.2,402.7 C232.2,396.3 227.1,393.1 227.1,385.9 L227.8,345.9 Z" fill="url(#st2022)" filter="url(#s1)"/>
<g filter="url(#b2022)"><path d="M202.1,337.2 Q220.6,342.8 220.6,359.6 L227.8,359.6 Q227.8,342.8 246.9,337.2 Z" fill="#24525a"/><circle cx="224.5" cy="292.3" r="51" fill="url(#gt)"/></g>
<text x="224.5" y="300.4" font-size="24.6" text-anchor="middle" fill="#fff" font-family='"Liberation Sans", sans-serif' >2022</text>
</svg>
<div class="t" style="left:33.6px;top:22.38px;font-size:10.3px;letter-spacing:0.254px;color:#474b50"><span>Flower discuss</span></div>
<div class="t" style="left:483.5px;top:23.58px;font-size:8.2px;letter-spacing:-0.036px;color:#a8a8a8"><span>Profile</span></div>
<div class="t" style="left:539.0px;top:23.58px;font-size:8.2px;letter-spacing:-0.156px;color:#a8a8a8"><span>Teams</span></div>
<div class="t" style="left:595.0px;top:23.58px;font-size:8.2px;letter-spacing:0.095px;color:#a8a8a8"><span>Collections</span></div>
<div class="t" style="left:669.2px;top:23.58px;font-size:8.2px;letter-spacing:0.145px;color:#a8a8a8"><span>Infographics</span></div>
<div class="t" style="left:46.2px;top:67.56px;font-size:20.6px;letter-spacing:-0.282px;color:#0e0e0e"><span>Enterprise development history</span></div>
<div class="t" style="left:331.4px;top:100.04px;font-size:15.2px;letter-spacing:-0.023px;color:#0e0e0e"><span>Open the global strategic</span></div>
<div class="t" style="left:342.4px;top:118.14px;font-size:15.2px;letter-spacing:-0.304px;color:#0e0e0e"><span>layout, Flower discuss is</span></div>
<div class="t" style="left:380.0px;top:136.54px;font-size:15.2px;letter-spacing:0.005px;color:#0e0e0e"><span>officially launched</span></div>
<div class="t" style="left:165.3px;top:170.24px;font-size:15.2px;letter-spacing:-0.372px;color:#0e0e0e"><span>On June 3, 2020, it was</span></div>
<div class="t" style="left:112.4px;top:188.84px;font-size:15.2px;letter-spacing:-0.152px;color:#0e0e0e"><span>awarded the Singapore license</span></div>
<div class="t" style="left:18.0px;top:263.44px;font-size:15.2px;letter-spacing:-0.191px;color:#0e0e0e"><span>The cumulative</span></div>
<div class="t" style="left:18.0px;top:281.54px;font-size:15.2px;letter-spacing:-0.064px;color:#0e0e0e"><span>transaction volume</span></div>
<div class="t" style="left:18.0px;top:299.64px;font-size:15.2px;letter-spacing:-0.189px;color:#0e0e0e"><span>reached 10 billion US</span></div>
<div class="t" style="left:18.0px;top:317.74px;font-size:15.2px;letter-spacing:-0.039px;color:#0e0e0e"><span>dollars, becoming the</span></div>
<div class="t" style="left:18.0px;top:335.84px;font-size:15.2px;letter-spacing:-0.028px;color:#0e0e0e"><span>digital asset trading</span></div>
<div class="t" style="left:18.0px;top:353.94px;font-size:15.2px;letter-spacing:0.223px;color:#0e0e0e"><span>platform with the</span></div>
<div class="t" style="left:18.0px;top:372.04px;font-size:15.2px;letter-spacing:-0.123px;color:#0e0e0e"><span>largest transaction</span></div>
<div class="t" style="left:18.0px;top:390.24px;font-size:15.2px;letter-spacing:-0.014px;color:#0e0e0e"><span>volume</span></div>
<div class="t" style="left:562.9px;top:293.24px;font-size:15.2px;letter-spacing:-0.469px;color:#0e0e0e"><span>Flower Discuss users</span></div>
<div class="t" style="left:562.9px;top:311.74px;font-size:15.2px;letter-spacing:-0.087px;color:#0e0e0e"><span>exceed 500 million+</span></div>
<div class="t" style="left:628.7px;top:170.94px;font-size:7.8px;letter-spacing:-0.132px;color:#0e0e0e"><span>Flower discussed with more than</span></div>
<div class="t" style="left:628.7px;top:189.44px;font-size:7.8px;letter-spacing:-0.132px;color:#0e0e0e"><span>20 institutions to jointly draft</span></div>
<div class="t" style="left:628.7px;top:207.94px;font-size:7.8px;letter-spacing:-0.132px;color:#0e0e0e"><span>and formulate the &quot;Blockchain</span></div>
<div class="t" style="left:628.7px;top:226.14px;font-size:7.8px;letter-spacing:-0.132px;color:#0e0e0e"><span>and Distributed Accounting</span></div>
<div class="t" style="left:628.7px;top:244.54px;font-size:7.8px;letter-spacing:-0.132px;color:#0e0e0e"><span>Information System Evaluation</span></div>
<div class="t" style="left:628.7px;top:262.94px;font-size:7.8px;letter-spacing:-0.132px;color:#0e0e0e"><span>Specification&quot;</span></div>
<div class="t" style="left:671.8px;top:69.83px;font-size:10.8px;letter-spacing:6.879px;color:#0e0e0e;-webkit-text-stroke:0.3px #0e0e0e"><span>Flower</span></div>
<div class="t" style="left:671.8px;top:89.23px;font-size:10.8px;letter-spacing:5.131px;color:#0e0e0e;-webkit-text-stroke:0.3px #0e0e0e"><span>discuss</span></div>
<div class="t" style="left:672.0px;top:109.23px;font-size:10.8px;letter-spacing:0.000px;color:#0e0e0e;-webkit-text-stroke:0.3px #0e0e0e"><span>FOUNDED</span></div>
</div>
</body></html>
